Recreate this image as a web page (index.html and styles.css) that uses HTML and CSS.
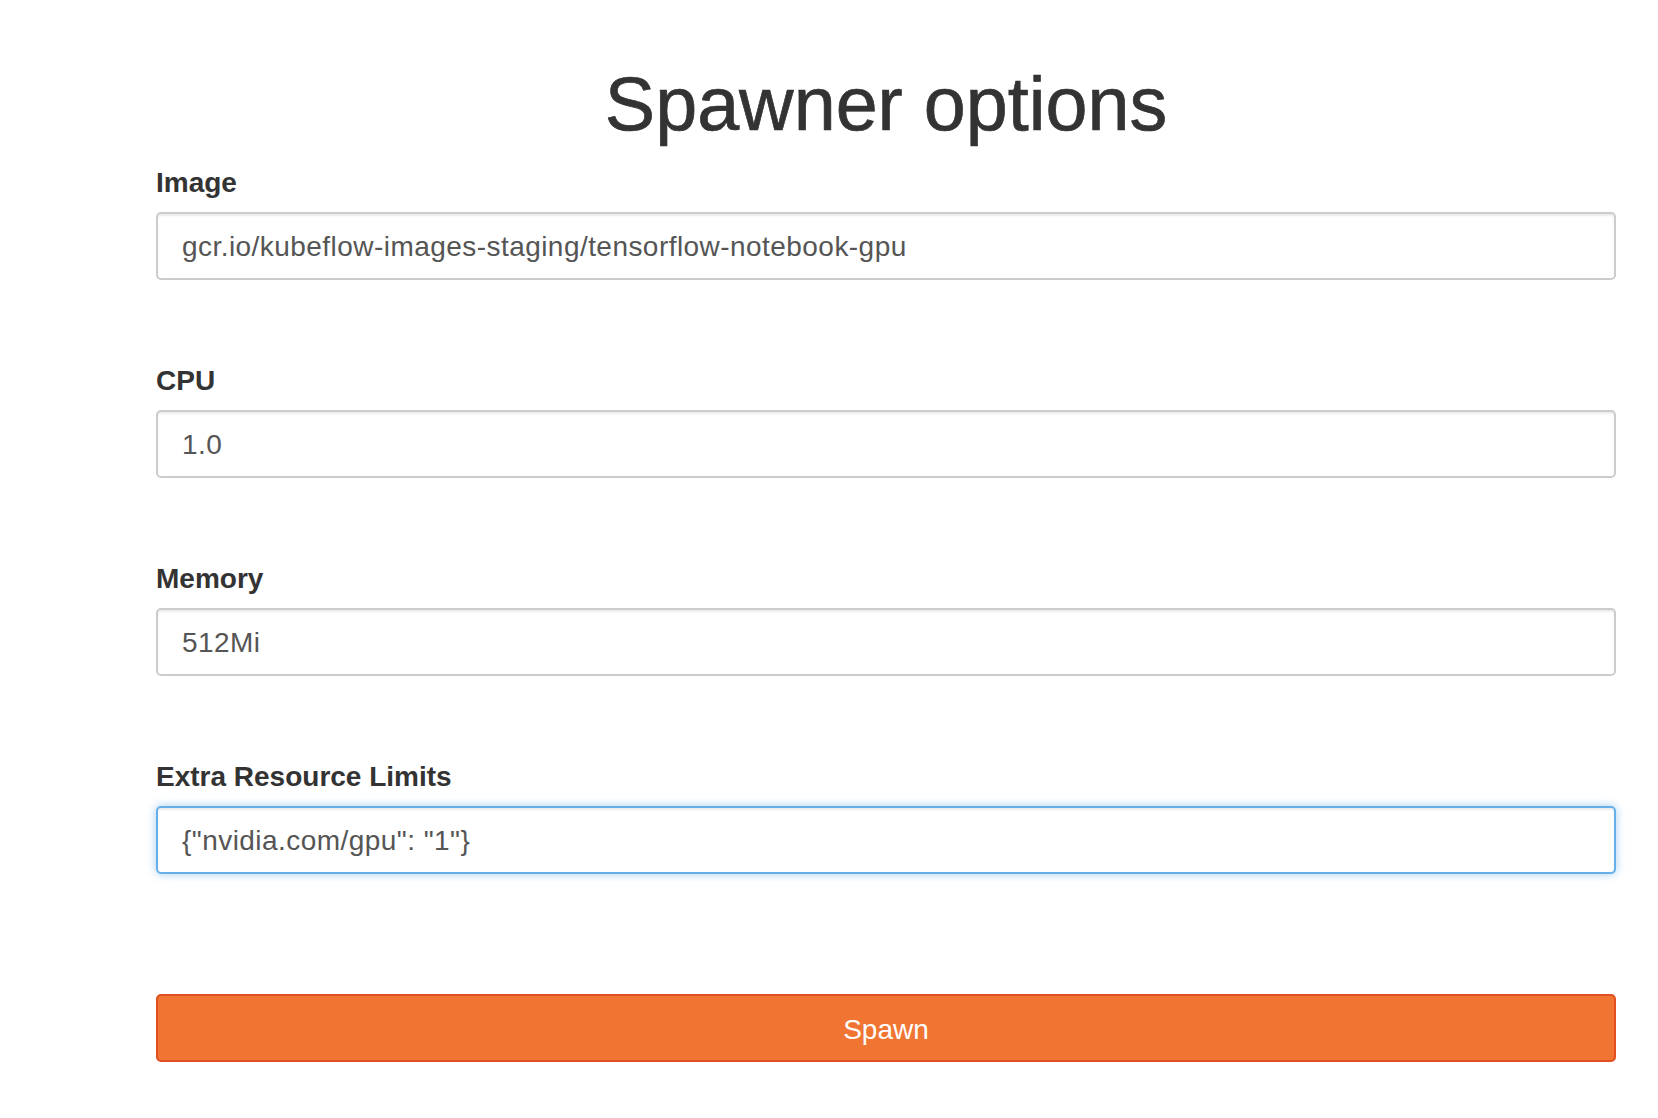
FILE: index.html
```html
<!DOCTYPE html>
<html lang="en">
<head>
<meta charset="utf-8">
<title>Spawner options</title>
<link rel="stylesheet" href="styles.css">
</head>
<body>
<div class="container">
  <h1 class="title">Spawner options</h1>
  <form class="spawn-form">
    <div class="form-group">
      <label class="field-label" for="image">Image</label>
      <input class="form-control" id="image" type="text" value="gcr.io/kubeflow-images-staging/tensorflow-notebook-gpu">
    </div>
    <div class="form-group">
      <label class="field-label" for="cpu">CPU</label>
      <input class="form-control" id="cpu" type="text" value="1.0">
    </div>
    <div class="form-group">
      <label class="field-label" for="memory">Memory</label>
      <input class="form-control" id="memory" type="text" value="512Mi">
    </div>
    <div class="form-group form-group-last">
      <label class="field-label" for="extra">Extra Resource Limits</label>
      <input class="form-control is-focused" id="extra" type="text" value='{"nvidia.com/gpu": "1"}'>
    </div>
    <button class="btn-spawn" type="button">Spawn</button>
  </form>
</div>
</body>
</html>
```
FILE: styles.css
```css
html, body {
  margin: 0;
  padding: 0;
  background: #fff;
}

body {
  font-family: "Liberation Sans", Arial, Helvetica, sans-serif;
  color: #333;
}

.container {
  width: 1460px;
  margin-left: 156px;
  padding-top: 63px;
}

.title {
  margin: 0 0 18px 0;
  font-size: 75.5px;
  line-height: 1.1;
  font-weight: 500;
  text-align: center;
  color: #333;
  -webkit-text-stroke: 0.7px #333;
}

.spawn-form {
  display: flex;
  flex-direction: column;
}

.form-group {
  display: flex;
  flex-direction: column;
  margin-bottom: 82px;
}

.form-group-last {
  margin-bottom: 120px;
}

.field-label {
  font-size: 28px;
  line-height: 37px;
  font-weight: bold;
  color: #333;
  margin-bottom: 11px;
}

.form-control {
  box-sizing: border-box;
  display: block;
  width: 100%;
  height: 68px;
  margin: 0;
  padding: 13px 24px 11px 24px;
  font-family: "Liberation Sans", Arial, Helvetica, sans-serif;
  font-size: 28px;
  letter-spacing: 0.45px;
  line-height: 40px;
  color: #555;
  background: #fff;
  border: 2px solid #ccc;
  border-radius: 5px;
  box-shadow: inset 0 2px 2px rgba(0, 0, 0, 0.075);
  outline: none;
}

.form-control.is-focused {
  border-color: #66afe9;
  box-shadow: inset 0 2px 2px rgba(0, 0, 0, 0.075), 0 0 10px rgba(102, 175, 233, 0.6);
}

.btn-spawn {
  box-sizing: border-box;
  display: block;
  width: 100%;
  height: 68px;
  margin: 0;
  padding: 14px 24px 10px 24px;
  font-family: "Liberation Sans", Arial, Helvetica, sans-serif;
  font-size: 28px;
  line-height: 40px;
  color: #fff;
  background: #f07432;
  border: 2px solid #e34f21;
  border-radius: 5px;
  text-align: center;
  cursor: pointer;
}
```
